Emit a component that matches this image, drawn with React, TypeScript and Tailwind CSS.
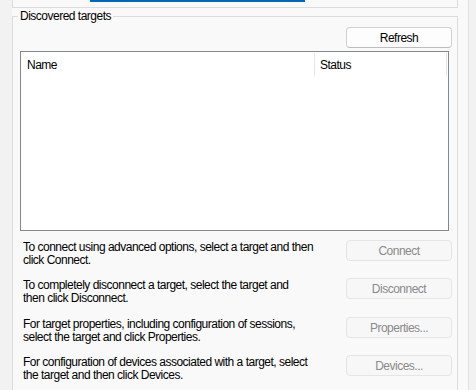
import React from 'react';

interface Action {
  text: string[];
  label: string;
  gap: string;
}

const actions: Action[] = [
  {
    text: ['To connect using advanced options, select a target and then', 'click Connect.'],
    label: 'Connect',
    gap: 'mt-[9px]',
  },
  {
    text: ['To completely disconnect a target, select the target and', 'then click Disconnect.'],
    label: 'Disconnect',
    gap: 'mt-[11px]',
  },
  {
    text: ['For target properties, including configuration of sessions,', 'select the target and click Properties.'],
    label: 'Properties...',
    gap: 'mt-[12px]',
  },
  {
    text: ['For configuration of devices associated with a target, select', 'the target and then click Devices.'],
    label: 'Devices...',
    gap: 'mt-[11px]',
  },
];

const App: React.FC = () => {
  return (
    <div className="w-[476px] h-[390px] overflow-hidden flex bg-[#f9f9f9] text-[12px] text-black font-['Liberation_Sans',Arial,sans-serif] tracking-[-0.5px]">
      <div className="w-[12px] shrink-0 bg-[#f2f2f2]" />

      <div className="w-[446px] shrink-0 flex flex-col">
        {/* panel above, scrolled away */}
        <div className="h-[8px] border-l border-r border-b border-[#dcdcdc]">
          <div className="ml-[77px] w-[215px] h-[2px] bg-[#0067c0]" />
        </div>

        <div className="relative mt-[8px] flex-1 border-l border-r border-t border-[#dcdcdc] pl-[7px] pr-[5px]">
          <span className="absolute -top-[8px] left-[5px] px-[2px] leading-[15px] bg-[#f9f9f9]">
            Discovered targets
          </span>

          <div className="mt-[10px] flex justify-end">
            <button className="w-[106px] h-[21px] rounded-[4px] border border-[#d0d0d0] border-b-[#bdbdbd] bg-[#fdfdfd] text-[12px] leading-none">
              Refresh
            </button>
          </div>

          <div className="mt-[3px] w-[429px] h-[180px] border border-[#828790] bg-white">
            <div className="h-[25px] flex">
              <div className="w-[293px] pl-[6px] flex items-center">Name</div>
              <div className="w-px my-[1px] bg-[#e5e5e5]" />
              <div className="w-[131px] pl-[5px] flex items-center">Status</div>
              <div className="w-px my-[1px] bg-[#e5e5e5]" />
            </div>
          </div>

          {actions.map((a) => (
            <div key={a.label} className={`${a.gap} flex items-start`}>
              <p className="pl-[3px] pt-[1px] leading-[13px] whitespace-nowrap">
                {a.text[0]}
                <br />
                {a.text[1]}
              </p>
              <button
                disabled
                className="ml-auto w-[106px] h-[21px] shrink-0 rounded-[4px] border border-[#e5e5e5] bg-[#f7f7f7] text-[#8a8a8a] text-[12px] leading-none"
              >
                {a.label}
              </button>
            </div>
          ))}
        </div>
      </div>

      <div className="w-[10px] shrink-0" />
      <div className="flex-1 border-l border-[#e3e3e3] bg-[#f2f2f2]" />
    </div>
  );
};

export default App;
